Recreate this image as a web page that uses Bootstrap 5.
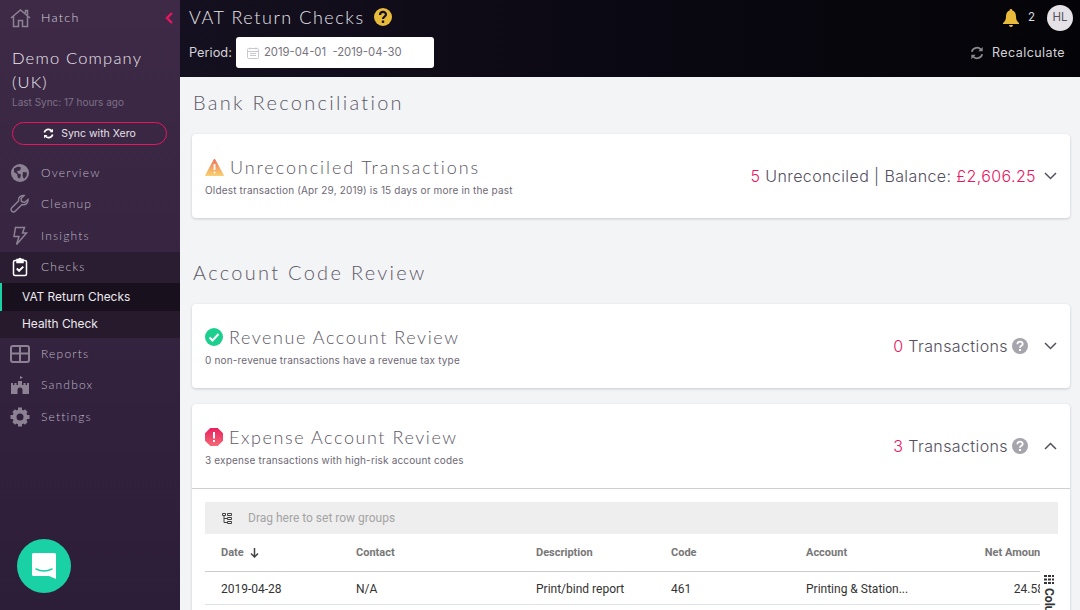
<!DOCTYPE html>
<html lang="en">
<head>
    <meta charset="UTF-8">
    <title>VAT Return Checks</title>
    <link href="https://cdn.jsdelivr.net/npm/bootstrap@5.3.0/dist/css/bootstrap.min.css" rel="stylesheet">
    <style>
        html, body { height: 610px; overflow: hidden; }
        body { font-family: "Inter", "Liberation Sans", sans-serif; background: #f3f4f6; color: #55505f; }
        .app-shell { height: 610px; }
        .side-bar { width: 180px; flex: none; background: linear-gradient(180deg, #3e2a47 0%, #2c1d38 100%); color: #e6e2e8; position: relative; }
        .thin-text { font-family: "Lato", "Liberation Sans", sans-serif; font-weight: 300; }
        .side-top { height: 36px; padding: 0 6px 0 10px; font-size: 12.5px; letter-spacing: 1.3px; color: #d8d3dc; }
        .side-top-label { gap: 6px; }
        .side-back { color: #e8165f; }
        .company-name { font-size: 16.5px; line-height: 24px; letter-spacing: 1.2px; padding: 10px 12px 0; color: #ece8ee; }
        .last-sync { font-size: 10px; line-height: 12px; padding: 2px 12px 0; color: #7d7086; }
        .sync-btn { display: flex; align-items: center; justify-content: center; gap: 7px; margin: 14px 13px 12px 12px; height: 23px; border: 1px solid #e8165f; border-radius: 12px; font-size: 10.5px; color: #e6e2e8; }
        .side-link { height: 31.5px; padding-left: 10px; gap: 11px; font-size: 12px; letter-spacing: 1.2px; color: #bfb7c4; }
        .side-link svg { width: 20px; height: 20px; flex: none; }
        .side-link.now { background: #2a1d31; color: #c3bdc7; }
        .side-sub { height: 27.5px; padding: 0 0 0 22px; font-size: 11.9px; color: #ece8ee; background: #261a2c; }
        .side-sub.now { background: #18101d; box-shadow: inset 2px 0 0 #1ad1a5; }
        .chat-bubble { position: absolute; left: 17px; top: 539px; width: 54px; height: 54px; border-radius: 50%; background: #1ad1a5; }
        .main-area { min-width: 0; }
        .top-bar { height: 77px; flex: none; background: linear-gradient(90deg, #15101f 0%, #0a0812 50%, #040408 100%); color: #dedce2; }
        .bar-left { padding: 5px 0 0 9px; }
        .bar-right { padding: 5px 7px 0 0; }
        .page-title { font-size: 18px; letter-spacing: 1.55px; line-height: 24px; color: #e6e4ea; }
        .title-help { margin-left: 1px; }
        .period-label { font-size: 12.8px; color: #d4d2d8; }
        .period-box { width: 198px; height: 31px; background: #fff; border-radius: 3px; font-size: 11.3px; color: #77727e; gap: 5px; padding-left: 11px; }
        .avatar-dot { width: 26px; height: 26px; border-radius: 50%; background: #e4e2e6; color: #55505f; font-size: 11.5px; }
        .recalc-row { margin: 13px 8px 0 0; }
        .recalc-text { font-size: 12.5px; letter-spacing: .42px; color: #d4d2d8; }
        .bell-num { font-size: 11.5px; }
        .content-area { padding: 0 10px 0 12px; overflow: hidden; }
        .section-head { font-size: 20px; letter-spacing: 2.3px; line-height: 26px; color: #5d5866; padding-left: 1px; }
        .first-head { padding-top: 12px; margin-bottom: 19px; }
        .second-head { margin-top: 41px; margin-bottom: 19px; }
        .check-card { border: 0; border-radius: 4px; box-shadow: 0 1px 3px rgba(40, 40, 60, .2); }
        .check-head { height: 84px; padding: 0 13px; }
        .title-row { margin-top: -1px; }
        .check-title { font-size: 18px; letter-spacing: 1.57px; line-height: 22px; color: #5d5866; margin-left: 2px; }
        .check-title.wide-title { letter-spacing: 1.92px; }
        .check-sub { font-size: 10px; letter-spacing: .17px; line-height: 12px; color: #6d6875; margin-top: 6px; }
        .check-count { font-size: 16px; font-weight: 300; letter-spacing: .4px; color: #55505f; }
        .pink-num { color: #e8165f; }
        .grid-wrap { border-top: 1px solid #cfcfd3; padding: 13px 12px 30px 13px; font-family: "Roboto", "Liberation Sans", sans-serif; }
        .group-panel { height: 32px; background: #eee; padding-left: 17px; gap: 16px; font-size: 12px; color: #a4a4a4; }
        .grid-clip { overflow: hidden; width: 835px; }
        .grid-table { width: 855px; table-layout: fixed; margin: 0; font-size: 12px; }
        .grid-table th { height: 37px; color: #777; font-size: 11px; font-weight: 700; border-bottom: 1px solid #ccc; padding: 1px 16px 0; vertical-align: middle; }
        .grid-table td { height: 33px; color: #333; border-bottom: 1px solid #dde2eb; padding: 2px 16px 0; vertical-align: middle; }
        .tool-strip { width: 18px; font-size: 12px; font-weight: 700; color: #333; padding-top: 41px; overflow: hidden; height: 76px; }
        .tool-strip svg, .tool-strip span { flex: none; }
        .tool-strip span { writing-mode: vertical-lr; line-height: 14px; }
    </style>
</head>
<body>
<div class="app-shell d-flex">
    <div class="side-bar d-flex flex-column">
        <div class="side-top thin-text d-flex align-items-center justify-content-between">
            <span class="side-top-label d-flex align-items-center">
                <svg width="21" height="20" viewBox="0 0 21 20" fill="none" stroke="#8d8294" stroke-width="1.5"><path d="M1 10 10.5 2 20 10M3.5 8.5V18.500h5V12.500h4v6h5V8.500M15.500 5V2.500h2V7"/></svg>
                <span class="ms-1">Hatch</span>
            </span>
            <svg class="side-back" width="10" height="14" viewBox="0 0 10 14" fill="none" stroke="currentColor" stroke-width="2.400"><path d="M8 2 3 7l5 5"/></svg>
        </div>
        <div class="company-name thin-text">Demo Company (UK)</div>
        <div class="last-sync">Last Sync: 17 hours ago</div>
        <div class="sync-btn">
            <svg width="11" height="11" viewBox="0 0 16 16" fill="none" stroke="#fff" stroke-width="2.400"><path d="M2 6.500A6 6 0 0 1 13 5M14 9.500A6 6 0 0 1 3 11"/><path d="M14.500 1v5h-5zM1.500 15v-5h5z" fill="#fff" stroke="none"/></svg>
            <span>Sync with Xero</span>
        </div>
        <div class="side-link thin-text d-flex align-items-center">
            <svg viewBox="0 0 20 20"><circle cx="10" cy="10" r="9" fill="#8d8294"/><path d="M4 5.500 8 3.500l3 1-1 3-3 .5 1 2.500 3 1-1 4-2-.5-1-4-3-2zM13 9l4 .5-.5 3.500-2.500 3-1.500-3z" fill="#3b2a45"/></svg>
            <span>Overview</span>
        </div>
        <div class="side-link thin-text d-flex align-items-center">
            <svg viewBox="0 0 20 20" fill="none" stroke="#8d8294" stroke-width="1.500"><path d="M18 5.500 14.500 8.500 11.500 7.500 11 4.500 14 1.500C10.500 1 8 3.500 8.500 7L1.800 13.800A2.300 2.300 0 0 0 5.200 17.200L12 10.500C15.500 11.500 18.500 9 18 5.500Z"/></svg>
            <span>Cleanup</span>
        </div>
        <div class="side-link thin-text d-flex align-items-center">
            <svg viewBox="0 0 20 20" fill="none" stroke="#8d8294" stroke-width="1.500"><path d="M5.500 1.500h9l-2 5.500h4L6.500 18.500 9 10.500H4z"/></svg>
            <span>Insights</span>
        </div>
        <div class="side-link now thin-text d-flex align-items-center">
            <svg viewBox="0 0 20 20" fill="none" stroke="#fff" stroke-width="1.500"><rect x="3.500" y="3.500" width="13" height="15" rx="1.500"/><path d="M7 2.500h2a1 1 0 0 1 2 0h2v3H7z" fill="#fff"/><path d="m6.800 11.500 2.300 2.300 4.200-4.200" stroke-width="2"/></svg>
            <span>Checks</span>
        </div>
        <div class="side-sub now d-flex align-items-center">VAT Return Checks</div>
        <div class="side-sub d-flex align-items-center">Health Check</div>
        <div class="side-link thin-text d-flex align-items-center">
            <svg viewBox="0 0 20 20" fill="none" stroke="#8d8294" stroke-width="2"><rect x="1" y="2" width="18" height="16" rx="2"/><path d="M1 9.500h18M10 2v16"/></svg>
            <span>Reports</span>
        </div>
        <div class="side-link thin-text d-flex align-items-center">
            <svg viewBox="0 0 20 20" fill="#8d8294"><path d="M10 1v3l3-1.500L10 1zM1 8h2v2h1.500V8h2v2H8V6h4v4h1.500V8h2v2H17V8h2v11h-6.500v-4a2.500 2.500 0 0 0-5 0v4H1z"/></svg>
            <span>Sandbox</span>
        </div>
        <div class="side-link thin-text d-flex align-items-center">
            <svg viewBox="0 0 20 20"><circle cx="10" cy="10" r="5.500" fill="none" stroke="#8d8294" stroke-width="4"/><path d="M8 .500h4v4H8zM8 15.500h4v4H8zM.500 8h4v4h-4zM15.500 8h4v4h-4zM2.300 5 5 2.300 8 5 5 8zM15 2.300 17.700 5 15 8l-3-3zM2.300 15 5 12l3 3-3 2.700zM15 12l2.700 3-2.700 2.700-3-2.700z" fill="#8d8294"/></svg>
            <span>Settings</span>
        </div>
        <div class="chat-bubble d-flex align-items-center justify-content-center">
            <svg width="26" height="28" viewBox="0 0 26 28"><path d="M2.500 1h21A1.500 1.500 0 0 1 25 2.500V27l-7-3H2.500A1.500 1.500 0 0 1 1 22.500V2.500A1.500 1.500 0 0 1 2.500 1Z" fill="#fff"/><path d="M5 17c5 2.500 11 2.500 16 0" fill="none" stroke="#1ad1a5" stroke-width="1.400" stroke-linecap="round"/></svg>
        </div>
    </div>
    <div class="main-area flex-grow-1 d-flex flex-column">
        <div class="top-bar d-flex justify-content-between">
            <div class="bar-left">
                <div class="d-flex align-items-center gap-2 mb-2">
                    <span class="page-title thin-text">VAT Return Checks</span>
                    <svg class="title-help" width="18" height="18" viewBox="0 0 18 18"><circle cx="9" cy="9" r="9" fill="#e9bb3a"/><path d="M6 7c0-4 6-4 6-.500 0 2.200-3 2-3 4.500" fill="none" stroke="#15101f" stroke-width="2.200"/><rect x="7.800" y="12.500" width="2.400" height="2.400" fill="#15101f"/></svg>
                </div>
                <div class="d-flex align-items-center gap-1">
                    <span class="period-label">Period:</span>
                    <div class="period-box d-flex align-items-center">
                        <svg width="12" height="12" viewBox="0 0 12 12" fill="none" stroke="#c8c8d0"><rect x=".500" y="1.500" width="11" height="10" rx="1"/><path d="M.500 4.500h11M3 6.500h6M3 8.500h6M3 .500v2M9 .500v2"/></svg>
                        <span>2019-04-01 &nbsp;-2019-04-30</span>
                    </div>
                </div>
            </div>
            <div class="bar-right d-flex flex-column align-items-end">
                <div class="d-flex align-items-center">
                    <svg width="18" height="20" viewBox="0 0 18 20" fill="#e9bb3a"><path d="M9 1a1.300 1.300 0 0 1 1.300 1.500C13 3.300 14 5.500 14 8.500c0 3 1 5 3 6.500v1H1v-1c2-1.500 3-3.500 3-6.500 0-3 1-5.200 3.700-6A1.300 1.300 0 0 1 9 1ZM7 17h4a2 2 0 0 1-4 0Z"/></svg>
                    <span class="bell-num ms-2 me-2">2</span>
                    <span class="avatar-dot d-flex align-items-center justify-content-center ms-1">HL</span>
                </div>
                <div class="recalc-row d-flex align-items-center gap-2">
                    <svg width="14" height="14" viewBox="0 0 16 16" fill="none" stroke="#8a8a8a" stroke-width="2"><path d="M2 6.500A6 6 0 0 1 13 5M14 9.500A6 6 0 0 1 3 11"/><path d="M14.500 1v5h-5zM1.500 15v-5h5z" fill="#8a8a8a" stroke="none"/></svg>
                    <span class="recalc-text">Recalculate</span>
                </div>
            </div>
        </div>
        <div class="content-area flex-grow-1">
            <div class="section-head first-head thin-text">Bank Reconciliation</div>
            <div class="card check-card">
                <div class="check-head d-flex align-items-center justify-content-between">
                    <div>
                        <div class="title-row d-flex align-items-center gap-1">
                            <svg width="19" height="18" viewBox="0 0 19 18"><defs><linearGradient id="warnFill" x1="0" y1="0" x2="0" y2="1"><stop offset="0" stop-color="#f0705a"/><stop offset="1" stop-color="#f8cf70"/></linearGradient></defs><path d="M9.500 1 18.500 17.500H.500z" fill="url(#warnFill)" stroke="url(#warnFill)" stroke-linejoin="round"/><path d="M9.500 6v6" stroke="#fff" stroke-width="1.800"/><circle cx="9.500" cy="14.500" r="1" fill="#fff"/></svg>
                            <span class="check-title wide-title thin-text">Unreconciled Transactions</span>
                        </div>
                        <div class="check-sub">Oldest transaction (Apr 29, 2019) is 15 days or more in the past</div>
                    </div>
                    <div class="check-count d-flex align-items-center">
                        <span><span class="pink-num">5</span> Unreconciled | Balance: <span class="pink-num">£2,606.25</span></span>
                        <svg class="ms-2" width="13" height="8" viewBox="0 0 13 8" fill="none" stroke="#55505f" stroke-width="1.500"><path d="m1 1 5.500 5.500L12 1"/></svg>
                    </div>
                </div>
            </div>
            <div class="section-head second-head thin-text">Account Code Review</div>
            <div class="card check-card mb-3">
                <div class="check-head d-flex align-items-center justify-content-between">
                    <div>
                        <div class="title-row d-flex align-items-center gap-1">
                            <svg width="18" height="18" viewBox="0 0 18 18"><circle cx="9" cy="9" r="9" fill="#1ccf8e"/><path d="m4.500 9.500 3 3 6-6.500" fill="none" stroke="#fff" stroke-width="2"/></svg>
                            <span class="check-title thin-text">Revenue Account Review</span>
                        </div>
                        <div class="check-sub">0 non-revenue transactions have a revenue tax type</div>
                    </div>
                    <div class="check-count d-flex align-items-center">
                        <span><span class="pink-num">0</span> Transactions</span>
                        <svg class="ms-1" width="16" height="16" viewBox="0 0 16 16"><circle cx="8" cy="8" r="8" fill="#a6a4ac"/><path d="M5.300 6.200c0-3.300 5.400-3.300 5.400-.300 0 2-2.700 1.800-2.700 3.800" fill="none" stroke="#fff" stroke-width="1.800"/><rect x="7" y="11" width="2" height="2" fill="#fff"/></svg>
                        <svg class="ms-3" width="13" height="8" viewBox="0 0 13 8" fill="none" stroke="#55505f" stroke-width="1.500"><path d="m1 1 5.500 5.500L12 1"/></svg>
                    </div>
                </div>
            </div>
            <div class="card check-card">
                <div class="check-head d-flex align-items-center justify-content-between">
                    <div>
                        <div class="title-row d-flex align-items-center gap-1">
                            <svg width="18" height="18" viewBox="0 0 18 18"><defs><linearGradient id="errFill" x1="0" y1="0" x2="0" y2="1"><stop offset="0" stop-color="#e8205f"/><stop offset="1" stop-color="#f56a75"/></linearGradient></defs><path d="M5.300 0h7.400L18 5.300v7.400L12.700 18H5.300L0 12.700V5.300z" fill="url(#errFill)"/><rect x="8" y="4" width="2" height="6.500" fill="#fff"/><rect x="8" y="12" width="2" height="2" fill="#fff"/></svg>
                            <span class="check-title thin-text">Expense Account Review</span>
                        </div>
                        <div class="check-sub">3 expense transactions with high-risk account codes</div>
                    </div>
                    <div class="check-count d-flex align-items-center">
                        <span><span class="pink-num">3</span> Transactions</span>
                        <svg class="ms-1" width="16" height="16" viewBox="0 0 16 16"><circle cx="8" cy="8" r="8" fill="#a6a4ac"/><path d="M5.300 6.200c0-3.300 5.400-3.300 5.400-.300 0 2-2.700 1.800-2.700 3.800" fill="none" stroke="#fff" stroke-width="1.800"/><rect x="7" y="11" width="2" height="2" fill="#fff"/></svg>
                        <svg class="ms-3" width="13" height="8" viewBox="0 0 13 8" fill="none" stroke="#55505f" stroke-width="1.500"><path d="M1 7 6.500 1.500 12 7"/></svg>
                    </div>
                </div>
                <div class="grid-wrap">
                    <div class="group-panel d-flex align-items-center">
                        <svg width="10" height="11" viewBox="0 0 10 11" fill="none" stroke="#444"><path d="M.500.500h3v2h-3zM5.500.500h4v2h-4zM5.500 4.500h4v2h-4zM5.500 8.500h4v2h-4zM2 2.500v7h3.500M2 5.500h3.500"/></svg>
                        <span>Drag here to set row groups</span>
                    </div>
                    <div class="d-flex">
                        <div class="grid-clip">
                            <table class="table grid-table">
                                <colgroup><col style="width:135px"><col style="width:180px"><col style="width:135px"><col style="width:135px"><col style="width:135px"><col style="width:135px"></colgroup>
                                <thead>
                                    <tr>
                                        <th>Date <svg class="ms-1" width="9" height="10" viewBox="0 0 9 10" fill="none" stroke="#444" stroke-width="1.500"><path d="M4.500 0v8.500M1 5.500l3.500 3.500L8 5.500"/></svg></th>
                                        <th>Contact</th>
                                        <th>Description</th>
                                        <th>Code</th>
                                        <th>Account</th>
                                        <th class="text-end">Net Amount</th>
                                    </tr>
                                </thead>
                                <tbody>
                                    <tr>
                                        <td>2019-04-28</td>
                                        <td>N/A</td>
                                        <td>Print/bind report</td>
                                        <td>461</td>
                                        <td>Printing &amp; Station...</td>
                                        <td class="text-end">24.58</td>
                                    </tr>
                                </tbody>
                            </table>
                        </div>
                        <div class="tool-strip d-flex flex-column align-items-center">
                            <svg width="10" height="9" viewBox="0 0 10 9" fill="#333" class="mb-1"><path d="M0 0h3v2H0zM4 0h3v2H4zM8 0h2v2H8zM0 3.500h3v2H0zM4 3.500h3v2H4zM8 3.500h2v2H8zM0 7h3v2H0zM4 7h3v2H4zM8 7h2v2H8z"/></svg>
                            <span>Columns</span>
                        </div>
                    </div>
                </div>
            </div>
        </div>
    </div>
</div>
<script src="https://cdn.jsdelivr.net/npm/bootstrap@5.3.0/dist/js/bootstrap.bundle.min.js"></script>
</body>
</html>
